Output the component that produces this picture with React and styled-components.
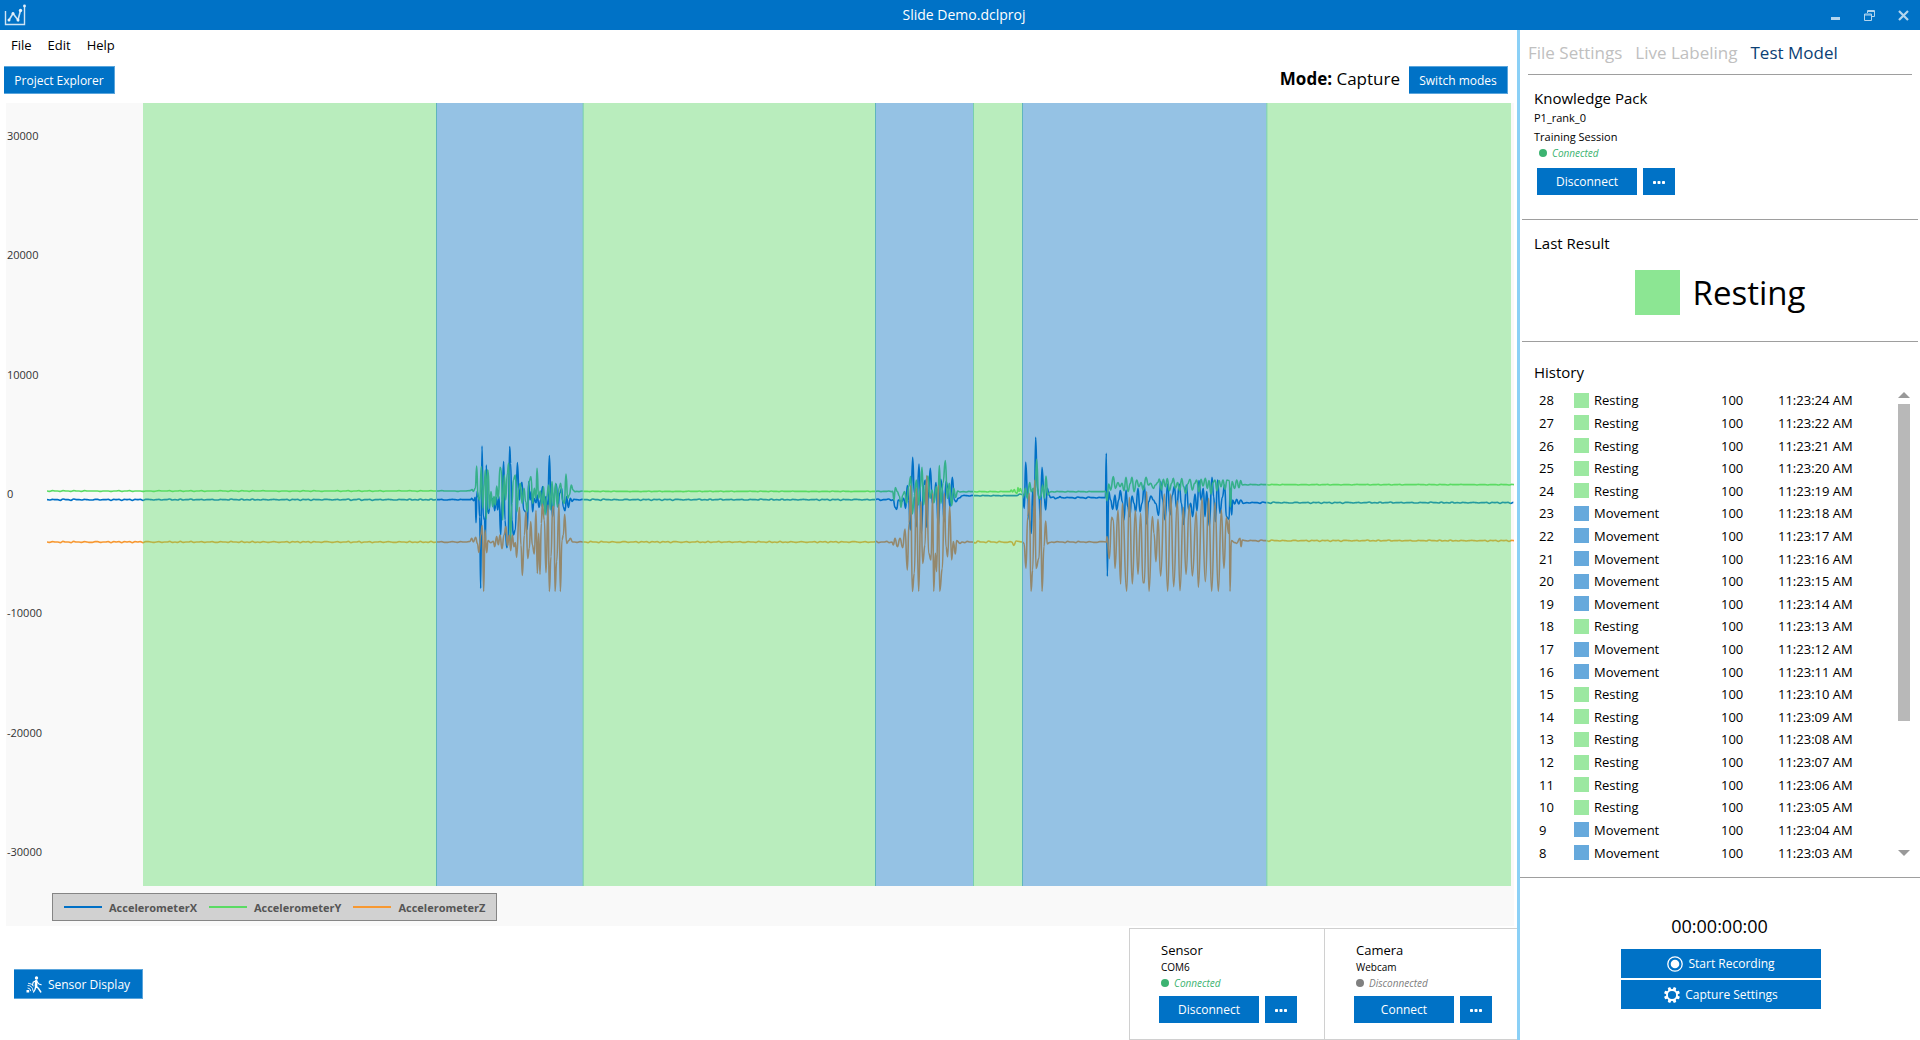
import React from "react";
import styled, { createGlobalStyle } from "styled-components";

const BLUE = "#0072c6";
const SANS = '"Open Sans", "Noto Sans", "Liberation Sans", sans-serif';

const GlobalStyle = createGlobalStyle`
  *, *::before, *::after { box-sizing: border-box; }
  body { margin: 0; background: #fff; color: #000; font-family: ${SANS}; font-size: 13px; }
  button { font-family: inherit; color: inherit; cursor: pointer; }
  h2, p, ul { margin: 0; padding: 0; font-weight: 400; }
`;

const Window = styled.div`
  display: flex;
  flex-direction: column;
  height: 100vh;
  overflow: hidden;
`;

const TitleBar = styled.header`
  display: flex;
  align-items: center;
  flex: none;
  height: 30px;
  padding: 0 0 0 4px;
  background: ${BLUE};
  color: #fff;
`;

const TitleSide = styled.div`
  flex: 1;
  display: flex;
  align-items: center;
  justify-content: ${(p) => (p.$end ? "flex-end" : "flex-start")};
`;

const Title = styled.div`
  padding-left: 4px;
  font-size: 14px;
  line-height: 20px;
`;

const WindowButton = styled.button`
  display: flex;
  align-items: center;
  justify-content: center;
  width: 34px;
  height: 30px;
  padding: 0;
  border: 0;
  background: none;
  color: #b3d5ee;
`;

const Body = styled.div`
  flex: 1;
  min-height: 0;
  display: grid;
  grid-template-columns: minmax(0, 1fr) 3px 400px;
`;

const Splitter = styled.div`
  background: #8bd0f6;
`;

const Main = styled.main`
  display: flex;
  flex-direction: column;
  min-height: 0;
`;

const MenuBar = styled.nav`
  display: flex;
  gap: 16px;
  height: 30px;
  padding: 0 11px;
`;

const MenuItem = styled.button`
  padding: 0;
  border: 0;
  background: none;
  font-size: 13px;
  line-height: 30px;
`;

const Toolbar = styled.div`
  display: flex;
  align-items: center;
  justify-content: space-between;
  padding: 6px 9px 9px 4px;
`;

const ModeGroup = styled.div`
  display: flex;
  align-items: flex-start;
  gap: 9px;
  font-size: 17px;
  line-height: 26px;
`;

const Button = styled.button`
  display: flex;
  align-items: center;
  justify-content: center;
  gap: 5px;
  width: ${(p) => p.$width}px;
  height: ${(p) => p.$height || 27}px;
  padding: 0;
  border: 0 solid #5aa5dc;
  border-width: ${(p) => (p.$bevel ? "1px 1px 1px 0" : "0")};
  background: ${BLUE};
  color: #fff;
  font-size: 12px;
  font-weight: 500;
  white-space: nowrap;
`;

const ChartPanel = styled.section`
  flex: 1;
  min-height: 0;
  display: flex;
  flex-direction: column;
  margin: 0 3px 2px 6px;
  background: #f9f9f9;
`;

const PlotRow = styled.div`
  flex: 1;
  min-height: 0;
  display: flex;
`;

const Axis = styled.ul`
  flex: none;
  width: 41px;
  padding: 25px 0 26px 1px;
  display: flex;
  flex-direction: column;
  justify-content: space-between;
  list-style: none;
  font-size: 11px;
  line-height: 16px;
  color: #333;
`;

const Plot = styled.svg`
  flex: 1;
  min-width: 0;
  width: 100%;
  height: 100%;
  display: block;
`;

const Legend = styled.ul`
  align-self: flex-start;
  display: flex;
  align-items: center;
  gap: 12px;
  height: 28px;
  margin: 7px 0 5px 46px;
  padding: 0 11px;
  border: 1px solid #858585;
  background: #d1d1d1;
  list-style: none;
  color: #555;
  font-size: 11px;
  font-weight: 700;
`;

const LegendItem = styled.li`
  display: flex;
  align-items: center;
  gap: 7px;
  &::before {
    content: "";
    width: 38px;
    height: 2px;
    background: ${(p) => p.$color};
  }
`;

const Footer = styled.footer`
  flex: none;
  display: flex;
  align-items: center;
  justify-content: space-between;
  height: 112px;
  padding-left: 14px;
`;

const Devices = styled.div`
  display: flex;
  align-self: stretch;
  border: solid #d0d0d0;
  border-width: 1px 0;
`;

const DeviceCard = styled.section`
  width: 195px;
  padding: 12px 0 0 29px;
  border-left: 1px solid #d0d0d0;
  &:last-child { width: 193px; }
`;

const DeviceTitle = styled.h2`
  padding-left: 2px;
  font-size: 13px;
  line-height: 18px;
`;

const Caption = styled.p`
  padding-left: ${(p) => (p.$large ? 0 : 2)}px;
  font-size: ${(p) => (p.$large ? 11 : 10)}px;
  line-height: ${(p) => (p.$large ? 19 : 17)}px;
`;

const Status = styled.p`
  display: flex;
  align-items: center;
  gap: 5px;
  padding-left: ${(p) => p.$indent || 2}px;
  color: ${(p) => (p.$on ? "#3cb371" : "#808080")};
  font-size: 10px;
  font-style: italic;
  line-height: 14px;
  &::before {
    content: "";
    width: 8px;
    height: 8px;
    border-radius: 50%;
    background: currentColor;
  }
`;

const ButtonRow = styled.div`
  display: flex;
  gap: 6px;
  padding: ${(p) => p.$pad || "6px 0 0"};
`;

const Side = styled.aside`
  display: flex;
  flex-direction: column;
  min-height: 0;
`;

const Tabs = styled.div`
  display: flex;
  gap: 13px;
  height: 45px;
  margin: 0 8px;
  border-bottom: 1px solid #9e9e9e;
`;

const Tab = styled.button`
  padding: 0;
  border: 0;
  background: none;
  color: ${(p) => (p.$active ? "#0b3f75" : "#c0c0c0")};
  font-size: 17px;
  line-height: 45px;
  white-space: nowrap;
`;

const Block = styled.section`
  flex: none;
  height: ${(p) => p.$height}px;
  margin: 0 2px;
  padding: 13px 12px 0;
  border-bottom: 1px solid #9e9e9e;
`;

const Heading = styled.h2`
  font-size: 15px;
  line-height: 20px;
`;

const Result = styled.div`
  display: flex;
  align-items: center;
  justify-content: center;
  gap: 13px;
  margin-top: 17px;
  font-size: 33px;
  line-height: 45px;
`;

const ResultSwatch = styled.span`
  width: 45px;
  height: 45px;
  background: #8ce693;
`;

const History = styled.section`
  flex: 1;
  min-height: 0;
  display: flex;
  flex-direction: column;
  padding: 20px 0 13px 14px;
  border-bottom: 1px solid #9e9e9e;
`;

const HistoryBody = styled.div`
  flex: 1;
  min-height: 0;
  display: flex;
  justify-content: space-between;
  padding: 7px 10px 0 5px;
`;

const HistoryTable = styled.table`
  width: 329px;
  height: 100%;
  table-layout: fixed;
  border-collapse: collapse;
  font-size: 13px;
  line-height: 18px;
  td { padding: 0; }
`;

const Col = styled.col`
  width: ${(p) => p.$width}px;
`;

const Label = styled.span`
  display: flex;
  align-items: center;
  gap: 5px;
  &::before {
    content: "";
    width: 15px;
    height: 15px;
    background: ${(p) => (p.$moving ? "#66a9dc" : "#9ce8a1")};
  }
`;

const ScrollTrack = styled.div`
  display: flex;
  flex-direction: column;
  width: 12px;
  padding: 3px 0 8px;
`;

const ScrollArrow = styled.span`
  border: 6px solid transparent;
  border-top: ${(p) => (p.$down ? "6px solid #999" : "0")};
  border-bottom: ${(p) => (p.$down ? "0" : "6px solid #999")};
`;

const ScrollSpace = styled.div`
  flex: 1;
  padding-top: 6px;
`;

const ScrollThumb = styled.div`
  height: 71%;
  background: #b8b8b8;
`;

const Recorder = styled.section`
  flex: none;
  display: flex;
  flex-direction: column;
  align-items: center;
  gap: 2px;
  height: 162px;
  padding: 36px 0 0 2px;
`;

const Timer = styled.output`
  padding: 0 3px 9px 0;
  font-size: 18px;
  line-height: 24px;
`;

/* Chart units: three per horizontal and vertical step. */
const VIEW = { left: 141, top: 309, width: 4401, height: 2349 };
const ORIGIN_Y = 1260;

const REGIONS = [
  [429, 1309, "#5adb63"],
  [1309, 1749, "#0070c6"],
  [1749, 2626, "#5adb63"],
  [2626, 2920, "#0070c6"],
  [2920, 3067, "#5adb63"],
  [3067, 3800, "#0070c6"],
  [3800, 4533, "#5adb63"],
];

const EDGES = [
  [1309, "#5fb5bd"],
  [1749, "#78cfae"],
  [2626, "#5fb5bd"],
  [2920, "#78cfae"],
  [3067, "#5fb5bd"],
  [3800, "#78cfae"],
];

/* Slight sensor noise along a resting stretch. */
const rest = (from, to, level, amount) => {
  const points = [];
  for (let x = from, i = 0; x < to; x += 8, i += 1) {
    points.push([x, level + Math.round(Math.sin(i * 2.3) * Math.sin(i * 0.7 + 1) * amount)]);
  }
  return points;
};

const burst = (start, text) =>
  text.split(" ").map((pair) => {
    const [x, y] = pair.split(",").map(Number);
    return [start + x, y];
  });

/* Joins samples with curves that level off at every peak. */
const toPath = (parts) => {
  const points = parts.flat().map(([x, y]) => [x, y + ORIGIN_Y]);
  return points.reduce((path, [x, y], i) => {
    if (i === 0) return `M${x} ${y}`;
    const [px, py] = points[i - 1];
    const mid = (px + x) / 2;
    return `${path}C${mid} ${py} ${mid} ${y} ${x} ${y}`;
  }, "");
};

const CHANNELS = [
  {
    name: "AccelerometerX",
    color: "#0070c6",
    path: toPath([
      rest(141, 1405, 239, 2),
      burst(1290, "122,239 125,235 131,242 136,232 138,308 141,215 146,232 149,290 152,505 156,78 160,290 164,300 166,380 169,135 172,270 176,280 181,230 186,240 190,235 194,272 199,232 203,270 207,230 212,345 216,240 221,125 225,300 230,383 234,370 239,80 242,130 246,300 250,345 256,330 262,128 268,240 272,200 276,187 281,270 287,275 292,328 296,185 300,240 304,215 308,275 312,235 318,248 322,225 327,262 332,240 338,200 343,260 348,230 353,290 358,107 363,230 368,290 374,215 379,193 384,262 389,220 395,205 400,262 405,272 410,230 415,262 421,235 426,244 432,238"),
      rest(1730, 2675, 239, 2),
      burst(2580, "100,239 105,262 110,268 115,240 125,245 131,235 137,265 142,197 146,240 151,330 158,112 163,220 169,320 177,132 184,340 191,195 196,180 200,322 206,215 211,145 217,250 222,240 228,188 235,320 242,178 247,205 252,305 258,185 264,205 270,260 277,172 283,240 288,245 295,235 300,233 305,228 312,226"),
      rest(2900, 3045, 227, 1),
      burst(2580, "470,227 480,222 487,224 493,265 497,127 503,225 508,300 514,340 518,210 523,275 527,52 532,205 537,230 541,300 546,142 552,225 557,270 562,205 567,225 572,233 580,231 586,236 595,233 600,230"),
      rest(3185, 3310, 233, 2),
      burst(3270, "46,233 49,100 52,469 56,215 62,240 68,268 75,225 80,270 86,240 91,212 97,245 102,300 108,210 113,260 119,290 126,228 132,250 137,275 144,205 150,275 156,250 163,195 170,312 176,245 183,228 190,240 197,250 206,286 212,185 218,240 225,300 233,192 240,285 247,225 253,200 260,265 268,192 274,250 281,313 289,195 296,270 302,250 308,290 315,222 321,272 327,182 333,240 340,205 345,290 350,215 358,318 366,172 371,230 376,305 383,180 390,280 397,232 404,195 409,290 417,298 421,205 425,285 428,240 434,252 440,238 446,252 452,240 460,250"),
      rest(3740, 4545, 248, 2),
    ]),
  },
  {
    name: "AccelerometerY",
    color: "#5adb63",
    path: toPath([
      rest(141, 1405, 213, 1),
      burst(1290, "120,212 126,209 130,214 136,205 140,138 144,230 149,240 154,140 158,265 163,190 166,150 169,297 172,150 175,155 178,265 183,215 188,260 192,230 196,255 200,198 205,235 210,142 214,150 218,300 223,165 227,240 232,160 236,130 241,365 246,250 250,180 256,165 261,275 266,205 271,190 276,250 282,205 287,245 292,275 297,185 303,170 308,250 313,205 318,235 321,145 326,235 331,213 336,260 341,200 345,285 350,230 356,195 361,270 366,185 371,262 377,190 382,260 387,205 392,190 397,240 403,250 408,162 413,235 418,225 424,195 429,210 435,215"),
      rest(1730, 2675, 214, 1),
      burst(2580, "98,214 102,240 106,203 112,215 118,228 123,262 128,225 134,215 140,250 146,200 152,170 157,282 163,230 169,180 175,255 181,205 186,142 191,255 197,195 204,168 210,235 216,210 222,248 229,200 234,240 238,137 243,250 249,190 256,122 262,235 268,190 275,257 281,205 287,232 293,213 300,216"),
      rest(2890, 3025, 215, 1),
      burst(2580, "450,215 454,210 458,216 463,209 467,218 471,220 474,203 477,214 481,206 485,215 490,230 496,205 502,235 509,188 514,215 520,205 525,230 530,118 536,235 542,230 548,195 553,235 558,168 563,225 570,216"),
      rest(3155, 3310, 215, 1),
      burst(3270, "46,214 51,242 56,192 62,210 70,170 76,205 84,188 90,200 96,190 102,212 108,172 114,215 121,190 126,172 132,215 140,180 147,200 153,188 160,210 168,172 175,195 182,190 190,205 196,195 203,188 208,177 214,210 220,178 226,200 232,176 238,212 245,190 250,175 256,205 263,188 269,212 275,176 281,200 287,220 293,192 300,178 307,210 314,190 320,180 327,215 333,178 339,198 346,175 352,205 357,182 363,222 369,188 375,180 381,212 387,182 393,200 399,180 405,208 411,180 418,182 421,262 426,185 434,205 440,180 447,203 452,182 457,195"),
      rest(3735, 4545, 194, 1),
    ]),
  },
  {
    name: "AccelerometerZ",
    color: "#f79831",
    path: toPath([
      rest(141, 1405, 366, 2),
      burst(1290, "120,364 125,355 130,366 137,352 142,370 147,397 152,345 157,317 161,514 165,330 170,398 174,362 182,368 190,364 194,380 200,350 205,374 210,345 216,386 222,345 228,320 232,378 238,345 242,392 247,345 252,380 256,368 260,412 268,262 273,375 277,466 283,345 288,275 293,415 298,385 302,305 307,375 313,402 318,272 322,460 326,340 330,463 334,310 337,252 343,300 348,458 354,255 358,514 363,410 368,260 372,260 375,514 380,425 387,252 391,514 396,360 400,345 404,283 410,370 416,362 421,355 428,366"),
      rest(1724, 2670, 366, 2),
      burst(2580, "96,366 100,375 105,355 112,380 120,355 128,383 135,327 142,450 147,310 152,197 157,514 163,460 169,205 176,514 183,245 188,430 195,375 200,167 206,400 213,420 218,220 221,514 226,400 230,455 235,195 239,514 247,445 253,220 258,380 263,410 269,260 275,420 280,365 286,402 290,362 300,370"),
      rest(2886, 3035, 366, 3),
      burst(2580, "455,366 462,376 468,363 487,366 492,370 498,445 503,290 508,220 513,514 518,450 524,180 528,445 537,415 542,240 546,514 552,380 557,303 562,372 568,368"),
      rest(3155, 3315, 366, 2),
      burst(3270, "49,366 51,350 58,416 65,292 70,300 75,445 84,270 92,492 97,250 110,514 118,232 127,492 136,272 144,463 152,280 159,488 163,488 170,215 177,514 187,290 192,340 198,425 204,298 212,468 223,222 233,514 242,222 251,500 262,242 270,512 280,262 288,463 298,255 307,468 319,275 325,502 336,235 346,485 356,235 365,514 375,248 385,514 394,270 402,445 409,292 416,340 418,298 420,514 424,362 435,368 440,370 450,355 453,380 457,360"),
      rest(3735, 4545, 362, 2),
    ]),
  },
];

const TICKS = [30000, 20000, 10000, 0, -10000, -20000, -30000];

const SECONDS = [24, 22, 21, 20, 19, 18, 17, 16, 15, 14, 13, 12, 11, 10, 9, 8, 7, 6, 5, 4, 3];
const MOVING = [23, 22, 21, 20, 19, 17, 16, 9, 8];
const RESULTS = SECONDS.map((second, i) => ({
  id: 28 - i,
  moving: MOVING.includes(28 - i),
  time: `11:23:${String(second).padStart(2, "0")} AM`,
}));

const AppLogo = () => (
  <svg width="22" height="22" viewBox="0 0 22 22" fill="none" stroke="#cfe4f4" strokeWidth="1.4" aria-hidden="true">
    <path d="M1.5 7v13.5h19V2" />
    <path d="M5 16 9 9.5l5 6.500L16.500 6.500" strokeWidth="1.600" />
    <g fill="#e6f1fa" stroke="none">
      <circle cx="5" cy="16" r="1.500" />
      <circle cx="9" cy="9.500" r="1.500" />
      <circle cx="14" cy="16" r="1.500" />
      <circle cx="16.500" cy="6.500" r="1.700" />
      <circle cx="20.500" cy="2" r="1.400" />
    </g>
  </svg>
);

const Dots = () => (
  <svg width="12" height="4" viewBox="0 0 12 4" fill="#fff" aria-hidden="true">
    <rect x="0" y="1" width="3" height="3" rx="0.800" />
    <rect x="4.500" y="1" width="3" height="3" rx="0.800" />
    <rect x="9" y="1" width="3" height="3" rx="0.800" />
  </svg>
);

const WalkerIcon = () => (
  <svg width="17" height="17" viewBox="0 0 17 17" fill="none" stroke="#fff" strokeLinecap="round" aria-hidden="true">
    <circle cx="10.500" cy="2" r="1.700" fill="#fff" stroke="none" />
    <path d="M10.300 5 10 10" strokeWidth="2.600" />
    <path d="M10.300 10.200 12.500 12.500 14.800 16M9.800 10.500 9 13.500 7.500 16" strokeWidth="1.400" />
    <path d="M10.500 5 13 8 15.200 8.800M9.500 5 7.200 6.200 6.500 9" strokeWidth="1.100" />
    <path d="M2 9.500q4.500 0 5 5M2 12q2.500 0 2.800 2.800M2.500 7.300q3 0 5 2.500" strokeWidth="0.900" />
    <path d="M0.500 14h2.700v2.500H0.500z" fill="#fff" stroke="none" />
  </svg>
);

const RecordIcon = () => (
  <svg width="16" height="16" viewBox="0 0 16 16" aria-hidden="true">
    <circle cx="8" cy="8" r="7.200" fill="none" stroke="#fff" strokeWidth="1.300" />
    <circle cx="8" cy="8" r="4.300" fill="#fff" />
  </svg>
);

const GearIcon = () => (
  <svg width="16" height="16" viewBox="0 0 16 16" fill="none" stroke="#fff" aria-hidden="true">
    <circle cx="8" cy="8" r="5" strokeWidth="1.800" />
    {[0, 45, 90, 135, 180, 225, 270, 315].map((angle) => (
      <path key={angle} d="M6.200 3.200 6.700 0h2.600L9.800 3.200z" fill="#fff" stroke="none" transform={`rotate(${angle + 22.5} 8 8)`} />
    ))}
  </svg>
);

const SignalPlot = () => (
  <Plot
    viewBox={`${VIEW.left} ${VIEW.top} ${VIEW.width} ${VIEW.height}`}
    preserveAspectRatio="none"
    role="img"
    aria-label="Accelerometer signals with labeled regions"
  >
    {CHANNELS.map((c) => (
      <path
        key={c.name}
        d={c.path}
        fill="none"
        stroke={c.color}
        strokeWidth="1.600"
        strokeLinejoin="bevel"
        vectorEffect="non-scaling-stroke"
      />
    ))}
    {REGIONS.map(([from, to, color]) => (
      <rect key={from} x={from} y={VIEW.top} width={to - from} height={VIEW.height} fill={color} fillOpacity="0.4" />
    ))}
    {EDGES.map(([x, color]) => (
      <rect key={x} x={x - 1} y={VIEW.top} width="3" height={VIEW.height} fill={color} />
    ))}
  </Plot>
);

const Device = ({ title, port, on, action }) => (
  <DeviceCard>
    <DeviceTitle>{title}</DeviceTitle>
    <Caption>{port}</Caption>
    <Status $on={on}>{on ? "Connected" : "Disconnected"}</Status>
    <ButtonRow>
      <Button $width={100}>{action}</Button>
      <Button $width={32} aria-label={`${title} options`}><Dots /></Button>
    </ButtonRow>
  </DeviceCard>
);

export default function App() {
  return (
    <Window>
      <GlobalStyle />
      <TitleBar>
        <TitleSide><AppLogo /></TitleSide>
        <Title>Slide Demo.dclproj</Title>
        <TitleSide $end>
          <WindowButton aria-label="Minimize">
            <svg width="11" height="12" viewBox="0 0 11 12"><path d="M1 8h9v3H1z" fill="currentColor" /></svg>
          </WindowButton>
          <WindowButton aria-label="Restore">
            <svg width="11" height="11" viewBox="0 0 11 11" fill="none" stroke="currentColor">
              <path d="M3.500 3V.5h7v6H8M3.500 1.500h7M.5 4h7v6.500h-7zM.5 5h7" />
            </svg>
          </WindowButton>
          <WindowButton aria-label="Close">
            <svg width="11" height="11" viewBox="0 0 11 11" stroke="currentColor" strokeWidth="2.200">
              <path d="M1 1l9 9M10 1l-9 9" />
            </svg>
          </WindowButton>
        </TitleSide>
      </TitleBar>
      <Body>
        <Main>
          <MenuBar aria-label="Main menu">
            <MenuItem>File</MenuItem>
            <MenuItem>Edit</MenuItem>
            <MenuItem>Help</MenuItem>
          </MenuBar>
          <Toolbar>
            <Button $bevel $height={28} $width={111}>Project Explorer</Button>
            <ModeGroup>
              <span><b>Mode:</b> Capture</span>
              <Button $bevel $height={28} $width={99}>Switch modes</Button>
            </ModeGroup>
          </Toolbar>
          <ChartPanel>
            <PlotRow>
              <Axis>{TICKS.map((t) => <li key={t}>{t}</li>)}</Axis>
              <SignalPlot />
            </PlotRow>
            <Legend>
              {CHANNELS.map((c) => <LegendItem key={c.name} $color={c.color}>{c.name}</LegendItem>)}
            </Legend>
          </ChartPanel>
          <Footer>
            <Button $bevel $height={30} $width={129}><WalkerIcon />Sensor Display</Button>
            <Devices>
              <Device title="Sensor" port="COM6" on action="Disconnect" />
              <Device title="Camera" port="Webcam" action="Connect" />
            </Devices>
          </Footer>
        </Main>
        <Splitter />
        <Side>
          <Tabs role="tablist">
            <Tab role="tab">File Settings</Tab>
            <Tab role="tab">Live Labeling</Tab>
            <Tab role="tab" $active aria-selected="true">Test Model</Tab>
          </Tabs>
          <Block $height={145}>
            <Heading>Knowledge Pack</Heading>
            <Caption $large>P1_rank_0</Caption>
            <Caption $large>Training Session</Caption>
            <Status $on $indent={5}>Connected</Status>
            <ButtonRow $pad="8px 0 0 3px">
              <Button $width={100}>Disconnect</Button>
              <Button $width={32} aria-label="Knowledge Pack options"><Dots /></Button>
            </ButtonRow>
          </Block>
          <Block $height={122}>
            <Heading>Last Result</Heading>
            <Result><ResultSwatch />Resting</Result>
          </Block>
          <History>
            <Heading>History</Heading>
            <HistoryBody>
              <HistoryTable>
                <colgroup>
                  <Col $width={35} />
                  <Col $width={147} />
                  <Col $width={57} />
                  <Col $width={90} />
                </colgroup>
                <tbody>
                  {RESULTS.map((r) => (
                    <tr key={r.id}>
                      <td>{r.id}</td>
                      <td><Label $moving={r.moving}>{r.moving ? "Movement" : "Resting"}</Label></td>
                      <td>100</td>
                      <td>{r.time}</td>
                    </tr>
                  ))}
                </tbody>
              </HistoryTable>
              <ScrollTrack aria-hidden="true">
                <ScrollArrow />
                <ScrollSpace><ScrollThumb /></ScrollSpace>
                <ScrollArrow $down />
              </ScrollTrack>
            </HistoryBody>
          </History>
          <Recorder>
            <Timer>00:00:00:00</Timer>
            <Button $width={200} $height={29}><RecordIcon />Start Recording</Button>
            <Button $width={200} $height={29}><GearIcon />Capture Settings</Button>
          </Recorder>
        </Side>
      </Body>
    </Window>
  );
}
